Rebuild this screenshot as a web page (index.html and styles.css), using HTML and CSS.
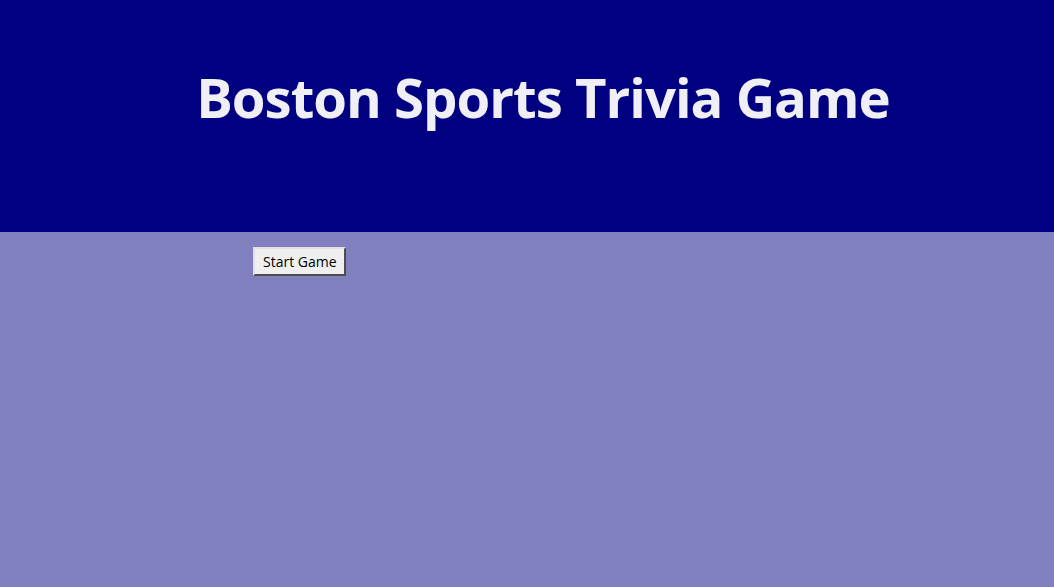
FILE: index.html
```html
<!DOCTYPE html>
<html>
<head>
<meta charset="utf-8">
<link rel="stylesheet" href="styles.css">
</head>
<body>
<header class="banner">
  <h1 class="title">Boston Sports Trivia Game</h1>
</header>
<main class="content">
  <button class="start-btn">Start Game</button>
</main>
</body>
</html>
```
FILE: styles.css
```css
html, body {
  margin: 0;
  padding: 0;
  height: 100%;
}
body {
  background: #8080bf;
  font-family: "Open Sans", "Noto Sans", sans-serif;
}
.banner {
  background: #000080;
  height: 232px;
  box-sizing: border-box;
  padding-top: 57px;
  padding-left: 32px;
}
.title {
  margin: 0;
  text-align: center;
  color: #efeff5;
  font-size: 54.5px;
  font-weight: 700;
  letter-spacing: -1px;
  line-height: 80px;
}
.content {
  padding: 15px 0 0 253px;
}
.start-btn {
  font-family: "Open Sans", "Noto Sans", sans-serif;
  font-size: 14px;
  color: #000;
  background: #efefef;
  border: 2px outset #e0e0e0;
  border-right-color: #a0a0a0;
  border-bottom-color: #a0a0a0;
  padding: 2px 7px 2px 8px;
  height: 29px;
  margin: 0;
}
```
